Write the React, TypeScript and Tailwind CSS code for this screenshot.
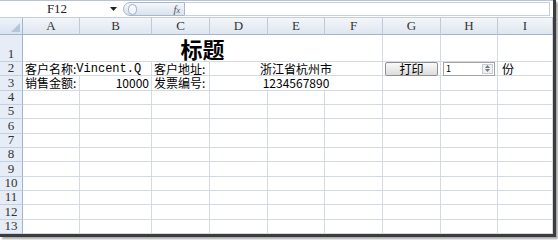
import React from 'react';

const cols = ['A', 'B', 'C', 'D', 'E', 'F', 'G', 'H', 'I'];
const rowNums = [2, 3, 4, 5, 6, 7, 8, 9, 10, 11, 12, 13];

const cjk = "font-['Noto_Sans_CJK_SC',sans-serif]";
const mono = "font-['Liberation_Mono','Noto_Sans_CJK_SC',monospace]";
const head = "font-['Liberation_Serif',serif]";

function Cell({ className = '', children }: { className?: string; children?: React.ReactNode }) {
  return (
    <div className={`border-r border-b border-[#d4dae4] overflow-visible whitespace-nowrap flex items-center text-[12px] leading-none text-black ${className}`}>
      {children}
    </div>
  );
}

function RowHead({ n }: { n: number }) {
  return (
    <div className={`bg-[#e6edf7] border-r border-[#9eb6ce] border-b border-b-[#c3d0e0] flex items-end justify-center pb-px text-[13px] leading-none text-[#333] ${head}`}>
      {n}
    </div>
  );
}

function FormulaBar() {
  return (
    <div className="h-[18px] flex items-stretch border-t border-[#b8c4d2] border-b border-b-[#c4ceda] bg-white">
      <div className={`w-[110px] flex items-center justify-center pl-[4px] text-[13px] text-[#222] ${head}`}>F12</div>
      <div className="w-[13px] flex items-center justify-start">
        <svg width="7" height="4" viewBox="0 0 7 4"><path d="M0 0h7L3.5 4z" fill="#222" /></svg>
      </div>
      <div className="w-[62px] my-px rounded-l-full border border-[#a9b6c6] bg-gradient-to-b from-[#f4f7fb] to-[#d9e2ee] flex items-center justify-between pl-[4px] pr-[4px]">
        <div className="w-[9px] h-[11px] rounded-full border border-[#9fb0c4] bg-white/60" />
        <span className="text-[11px] italic text-[#555] font-['Liberation_Serif',serif]">f<span className="text-[8px]">x</span></span>
      </div>
      <div className="flex-1 mr-[3px] border-y border-r border-[#c7d1dd] my-px" />
    </div>
  );
}

export default function App() {
  return (
    <div className="w-[558px] h-[240px] bg-white overflow-hidden">
      <div className="w-[556px] border-r-[3px] border-[#3c3c3c] shadow-[2px_2px_2px_rgba(0,0,0,0.35)]">
        <FormulaBar />
        <div className="grid grid-cols-[23px_57px_72px_58px_58px_57px_58px_58px_57px_55px] grid-rows-[17px_27px_repeat(12,14.35px)] border-b-[3px] border-[#3c3c3c]">
          {/* header */}
          <div className="bg-gradient-to-b from-[#eef3f9] to-[#d9e3ef] border-r border-b border-[#9eb6ce] relative">
            <div className="absolute right-[2px] bottom-[2px] w-0 h-0 border-l-[9px] border-l-transparent border-b-[9px] border-b-[#b6c5d8]" />
          </div>
          {cols.map(c => (
            <div key={c} className={`bg-gradient-to-b from-[#f3f6fa] to-[#dfe6ef] border-r border-[#c0cad6] border-b border-b-[#9eb6ce] flex items-center justify-center text-[13px] text-[#333] ${head}`}>
              {c}
            </div>
          ))}

          {/* row 1 */}
          <RowHead n={1} />
          <Cell className={`col-span-6 justify-center items-end pb-[2px] text-[22px] font-bold ${cjk}`}>标题</Cell>
          <Cell />
          <Cell />
          <Cell />

          {/* row 2 */}
          <RowHead n={2} />
          <Cell className={`col-span-2 pl-[2px] ${cjk}`}>
            客户名称:<span className={mono}>Vincent.Q</span>
          </Cell>
          <Cell className={`pl-[2px] ${cjk}`}>客户地址:</Cell>
          <Cell className={`col-span-3 justify-center ${cjk}`}>浙江省杭州市</Cell>
          <Cell className="justify-center">
            <button className={`w-[53px] h-[14px] rounded-[2px] border border-[#8e8f8f] bg-gradient-to-b from-[#fafafa] to-[#dcdcdc] text-[12px] leading-none text-black ${cjk}`}>
              打印
            </button>
          </Cell>
          <Cell className="justify-center">
            <div className="w-[52px] h-[14px] bg-white border border-[#a4a4a4] flex items-stretch">
              <span className={`flex-1 text-[9px] leading-[12px] pl-[2px] ${cjk}`}>1</span>
              <div className="w-[11px] my-px mr-px border border-[#c9ced6] bg-[#eef1f5] flex flex-col items-center justify-around">
                <svg width="5" height="3" viewBox="0 0 5 3"><path d="M0 3h5L2.5 0z" fill="#777" /></svg>
                <svg width="5" height="3" viewBox="0 0 5 3"><path d="M0 0h5L2.5 3z" fill="#777" /></svg>
              </div>
            </div>
          </Cell>
          <Cell className={`pl-[4px] ${cjk}`}>份</Cell>

          {/* row 3 */}
          <RowHead n={3} />
          <Cell className={`pl-[2px] ${cjk}`}>销售金额:</Cell>
          <Cell className={`pr-[2px] ${cjk}`}>
            <span className="w-full text-right">10000</span>
          </Cell>
          <Cell className={`pl-[2px] ${cjk}`}>发票编号:</Cell>
          <Cell className={`col-span-3 justify-center ${cjk}`}>1234567890</Cell>
          <Cell />
          <Cell />
          <Cell />

          {/* empty rows */}
          {rowNums.slice(2).map(n => (
            <React.Fragment key={n}>
              <RowHead n={n} />
              {cols.map(c => <Cell key={c} />)}
            </React.Fragment>
          ))}
        </div>
      </div>
    </div>
  );
}
